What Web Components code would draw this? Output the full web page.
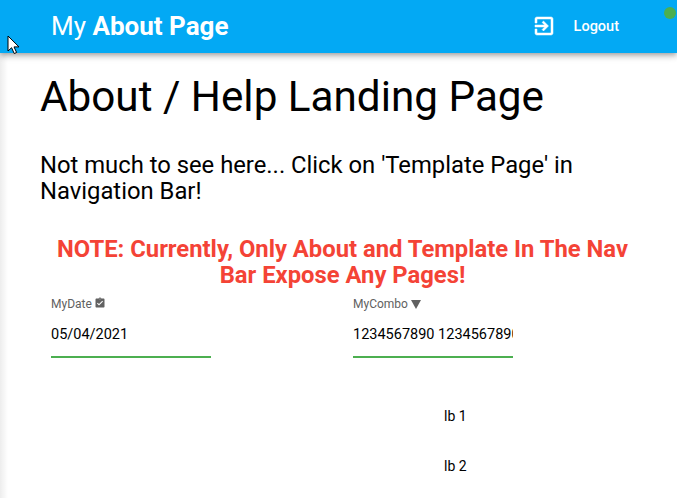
<!DOCTYPE html>
<html>
<head>
<meta charset="utf-8">
<style>
  html, body { margin: 0; padding: 0; height: 100%; overflow: hidden; background: #fff; }
  body { font-family: Roboto, "Liberation Sans", sans-serif; color: #000; }
</style>
</head>
<body>
<app-shell>
  <app-bar slot="bar"><span>My</span> <b>About Page</b></app-bar>
  <about-page></about-page>
</app-shell>

<script>
class AppShell extends HTMLElement {
  constructor() {
    super()
    this.attachShadow({ mode: 'open' })
    this.shadowRoot.innerHTML = `
    <style>
      :host { display: block; position: relative; height: 498px; overflow: hidden; }
      .edge {
        position: absolute; left: 0; top: 0; bottom: 0; width: 8px;
        background: linear-gradient(to right, rgba(0,0,0,.07), rgba(0,0,0,0));
      }
      .cursor { position: absolute; left: 7px; top: 35px; z-index: 10; }
    </style>
    <slot name="bar"></slot>
    <slot></slot>
    <div class="edge"></div>
    <svg class="cursor" width="14" height="20" viewBox="0 0 14 20">
      <path d="M1 1v15l3.6-3.3 2.6 5.8 2.4-1-2.6-5.6H12z" fill="#fff" stroke="#000" stroke-width="1"/>
    </svg>
    `
  }
}

class AppBar extends HTMLElement {
  constructor() {
    super()
    this.attachShadow({ mode: 'open' })
    this.shadowRoot.innerHTML = `
    <style>
      :host {
        display: flex; align-items: center; position: relative; z-index: 5;
        height: 53px; background: #03a9f4; color: #fff;
        padding-left: 51px;
        box-shadow: 0 2px 4px -1px rgba(0,0,0,.2), 0 4px 5px 0 rgba(0,0,0,.14), 0 1px 10px 0 rgba(0,0,0,.12);
      }
      .title { font-size: 26px; line-height: 32px; white-space: pre; margin-top: -1px; }
      .logout {
        margin-left: auto; margin-right: 58px;
        display: flex; align-items: center; gap: 18px;
        font-size: 14.5px; font-weight: 500; margin-top: -1px;
      }
      svg { display: block; stroke: #fff; stroke-width: .5; }
      .dot {
        position: absolute; right: 1px; top: 7px;
        width: 12px; height: 12px; border-radius: 50%; background: #4caf50;
      }
    </style>
    <div class="title"><slot></slot></div>
    <div class="logout">
      <svg width="24" height="24" viewBox="0 0 24 24" fill="#fff">
        <path d="M10.09 15.59L11.5 17l5-5-5-5-1.41 1.41L12.67 11H3v2h9.67l-2.58 2.59zM19 3H5c-1.11 0-2 .9-2 2v4h2V5h14v14H5v-4H3v4c0 1.1.89 2 2 2h14c1.1 0 2-.9 2-2V5c0-1.1-.9-2-2-2z"/>
      </svg>
      <span>Logout</span>
    </div>
    <div class="dot"></div>
    `
  }
}

class FormField extends HTMLElement {
  constructor() {
    super()
    this.attachShadow({ mode: 'open' })
    this.shadowRoot.innerHTML = `
    <style>
      :host { display: block; width: 160px; }
      .label {
        display: flex; align-items: center; gap: 2px;
        height: 16px; font-size: 12px; color: #616161;
      }
      .value {
        margin-top: 11px; height: 24px; line-height: 24px; font-size: 14.5px; color: #000;
        white-space: nowrap; overflow: hidden;
      }
      .line { margin-top: 9px; height: 2px; background: #4caf50; }
      ::slotted(svg) { display: block; }
    </style>
    <div class="label"><span>${this.getAttribute('label')}</span><slot></slot></div>
    <div class="value">${this.getAttribute('value')}</div>
    <div class="line"></div>
    `
  }
}

class AboutPage extends HTMLElement {
  constructor() {
    super()
    this.attachShadow({ mode: 'open' })
    this.shadowRoot.innerHTML = `
    <style>
      :host { display: block; padding: 0 32px 0 40px; }
      h1 { margin: 0; padding-top: 16px; font-size: 42.24px; line-height: 56px; font-weight: 400; }
      h2 { margin: 27px 0 0; font-size: 23.8px; line-height: 26px; font-weight: 400; }
      h3 {
        margin: 32px 0 0; font-size: 23.8px; line-height: 26px; font-weight: 700;
        text-align: center; color: #f44336;
      }
      .fields {
        display: grid; grid-template-columns: 302px 160px;
        margin: 8px 0 0 11px;
      }
      .labels {
        display: flex; flex-direction: column; gap: 30px;
        margin: 48px 0 0 404px; font-size: 14px; line-height: 20px;
      }
      svg { fill: #616161; }
    </style>
    <h1>About / Help Landing Page</h1>
    <h2>Not much to see here... Click on 'Template Page' in Navigation Bar!</h2>
    <h3>NOTE: Currently, Only About and Template In The Nav Bar Expose Any Pages!</h3>
    <div class="fields">
      <form-field label="MyDate" value="05/04/2021">
        <svg width="12" height="12" viewBox="0 0 24 24" style="margin-top:-3px"><path d="M19 3h-4.18C14.4 1.84 13.3 1 12 1s-2.4.84-2.82 2H5c-1.1 0-2 .9-2 2v14c0 1.1.9 2 2 2h14c1.1 0 2-.9 2-2V5c0-1.1-.9-2-2-2zm-7 0c.55 0 1 .45 1 1s-.45 1-1 1-1-.45-1-1 .45-1 1-1zm-2 14l-4-4 1.41-1.41L10 14.17l6.59-6.59L18 9l-8 8z"/></svg>
      </form-field>
      <form-field label="MyCombo" value="1234567890 1234567890">
        <svg width="12" height="12" viewBox="0 0 12 12"><path d="M1 2h10L6 11z"/></svg>
      </form-field>
    </div>
    <div class="labels"><div>lb 1</div><div>lb 2</div></div>
    `
  }
}

customElements.define('app-shell', AppShell)
customElements.define('app-bar', AppBar)
customElements.define('form-field', FormField)
customElements.define('about-page', AboutPage)
</script>
</body>
</html>
